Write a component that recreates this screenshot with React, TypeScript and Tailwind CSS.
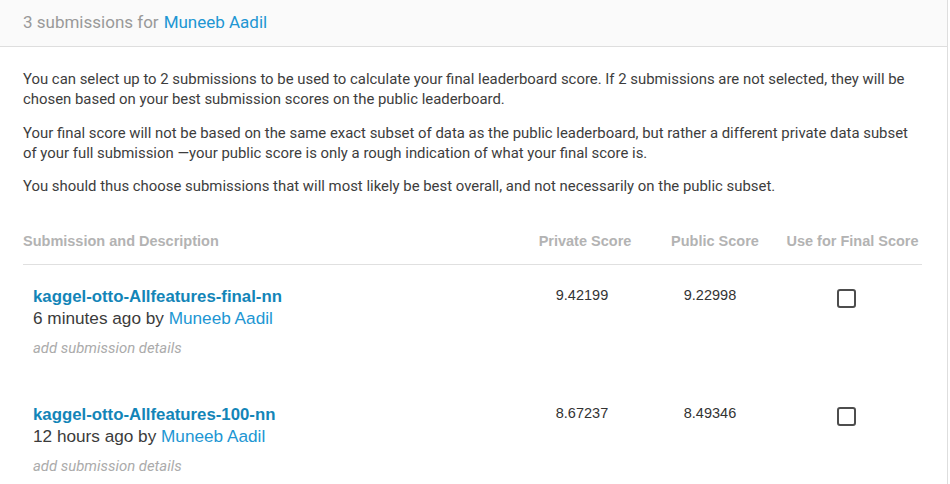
import React from "react";

const rows = [
  { name: "kaggel-otto-Allfeatures-final-nn", when: "6 minutes ago", priv: "9.42199", pub: "9.22998" },
  { name: "kaggel-otto-Allfeatures-100-nn", when: "12 hours ago", priv: "8.67237", pub: "8.49346" },
];

export default function App() {
  return (
    <main className="min-h-screen bg-white">
      <div className="w-[948px] h-[484px] border-r border-[#dedede] overflow-hidden">
        {/* Header */}
        <div className="h-[47px] bg-[#fafafa] border-b border-[#dedede] flex items-center px-[23px] font-['Roboto',sans-serif] text-[17px] text-[#999]">
          <span>3 submissions for</span>
          <span className="ml-[5px] text-[#2196d3]">Muneeb Aadil</span>
        </div>

        <div className="pl-[23px] pr-[28px] pt-[22px] font-['Roboto',sans-serif] text-[14.9px] leading-[20px] text-[#3d3d3d]">
          <p>
            You can select up to 2 submissions to be used to calculate your final leaderboard score. If 2 submissions are not selected, they will be chosen based on your best submission scores on the public leaderboard.
          </p>
          <p className="mt-[14px]">
            Your final score will not be based on the same exact subset of data as the public leaderboard, but rather a different private data subset of your full submission —your public score is only a rough indication of what your final score is.
          </p>
          <p className="mt-[13px]">
            You should thus choose submissions that will most likely be best overall, and not necessarily on the public subset.
          </p>
        </div>

        {/* Table */}
        <div className="mx-[23px] mt-[35px] w-[899px] font-['Liberation_Sans',Arial,sans-serif]">
          <div className="flex h-[34px] items-start border-b border-[#e0e0e0] text-[14.5px] font-bold text-[#b3b3b3] whitespace-nowrap">
            <div className="flex-1">Submission and Description</div>
            <div className="w-[124px] text-center">Private Score</div>
            <div className="w-[136px] text-center">Public Score</div>
            <div className="w-[139px] text-center">Use for Final Score</div>
          </div>

          {rows.map((r) => (
            <div key={r.name} className="flex h-[118px] pt-[23px]">
              <div className="flex-1 pl-[10px]">
                <div className="text-[16.8px] font-bold text-[#1385b8] leading-[18px]">{r.name}</div>
                <div className="text-[17.2px] text-[#3b3b3b] leading-[22px] mt-[1px]">
                  {r.when} by <span className="text-[#2196d3]">Muneeb Aadil</span>
                </div>
                <div className="mt-[10px] font-['Roboto',sans-serif] italic text-[14.9px] text-[#ababab] leading-[18px]">
                  add submission details
                </div>
              </div>
              <div className="w-[124px] text-center pr-[6px] text-[14.5px] text-[#333] leading-[14px]">{r.priv}</div>
              <div className="w-[136px] text-center pr-[10px] text-[14.5px] text-[#333] leading-[14px]">{r.pub}</div>
              <div className="w-[139px] flex justify-center pr-[13px] pt-[1px]">
                <div className="w-[19px] h-[19px] rounded-[3px] border-2 border-[#4d4d4d] bg-white" />
              </div>
            </div>
          ))}
        </div>
      </div>
    </main>
  );
}
